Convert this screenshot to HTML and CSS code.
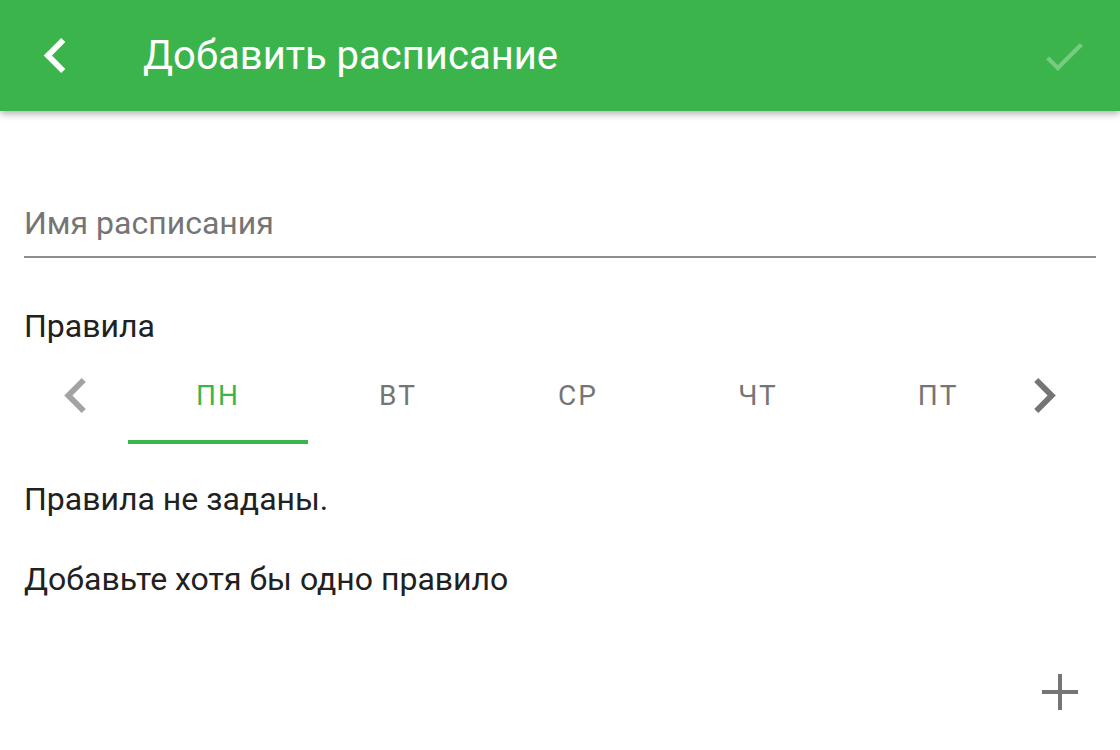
FILE: index.html
```html
<!DOCTYPE html>
<html lang="ru">
<head>
<meta charset="utf-8">
<title>Добавить расписание</title>
<link rel="stylesheet" href="styles.css">
</head>
<body>
<header class="appbar">
  <button class="appbar-back" aria-label="Назад">
    <svg class="chev" viewBox="8 6 7.41 12" width="23" height="35"><path d="M15.41 7.41L14 6l-6 6 6 6 1.41-1.41L10.83 12z" fill="#fff"/></svg>
  </button>
  <h1 class="appbar-title">Добавить расписание</h1>
  <button class="appbar-save" aria-label="Сохранить">
    <svg viewBox="3.41 5.59 17.59 13.41" width="37" height="28"><path d="M9 16.17L4.83 12l-1.42 1.41L9 19 21 7l-1.41-1.41z" fill="#fff"/></svg>
  </button>
</header>
<main class="content">
  <div class="field">Имя расписания</div>
  <div class="section-title">Правила</div>
  <div class="tabs">
    <div class="tab-arrow tab-arrow-left">
      <svg viewBox="8 6 7.41 12" width="22" height="35"><path d="M15.41 7.41L14 6l-6 6 6 6 1.41-1.41L10.83 12z" fill="#a3a3a3"/></svg>
    </div>
    <div class="tab active">ПН</div>
    <div class="tab">ВТ</div>
    <div class="tab">СР</div>
    <div class="tab">ЧТ</div>
    <div class="tab">ПТ</div>
    <div class="tab-arrow tab-arrow-right">
      <svg viewBox="8.59 6 7.41 12" width="22" height="35"><path d="M8.59 16.59L10 18l6-6-6-6-1.41 1.41L13.17 12z" fill="#757575"/></svg>
    </div>
  </div>
  <p class="empty-title">Правила не заданы.</p>
  <p class="empty-hint">Добавьте хотя бы одно правило</p>
  <div class="add-row">
    <button class="add-btn" aria-label="Добавить правило">
      <svg viewBox="0 0 36 36" width="36" height="36"><path d="M16 0h4v16h16v4H20v16h-4V20H0v-4h16z" fill="#757575"/></svg>
    </button>
  </div>
</main>
</body>
</html>
```

FILE: styles.css
```css
* { box-sizing: border-box; }

html, body {
  margin: 0;
  padding: 0;
  background: #ffffff;
}

body {
  width: 1120px;
  height: 750px;
  overflow: hidden;
  font-family: Roboto, "Noto Sans", "Liberation Sans", sans-serif;
  color: #212121;
}

button {
  border: 0;
  background: none;
  padding: 0;
  margin: 0;
  cursor: pointer;
}

svg { display: block; }

.appbar {
  height: 111px;
  background: #3bb54b;
  display: flex;
  align-items: center;
  padding-left: 43px;
  padding-right: 37px;
  box-shadow: 0 3px 7px rgba(0, 0, 0, 0.3);
  position: relative;
  z-index: 1;
}

.appbar-back {
  width: 23px;
  height: 35px;
}

.appbar-title {
  margin: 0 0 0 77px;
  flex: 1;
  font-size: 40px;
  line-height: 46px;
  font-weight: 400;
  color: #ffffff;
}

.appbar-save {
  width: 37px;
  height: 28px;
  opacity: 0.3;
  margin-top: 2px;
}

.content {
  padding: 0 24px;
}

.field {
  margin-top: 94px;
  font-size: 32px;
  line-height: 36px;
  color: #757575;
  padding-bottom: 15px;
  border-bottom: 2px solid #8e8e8e;
}

.section-title {
  margin-top: 50px;
  font-size: 32px;
  line-height: 36px;
  color: #212121;
}

.tabs {
  margin-top: 4px;
  height: 96px;
  display: flex;
}

.tab-arrow {
  padding-top: 30px;
}

.tab-arrow-left {
  width: 104px;
  padding-left: 40px;
}

.tab-arrow-right {
  padding-left: 6px;
}

.tab {
  width: 180px;
  height: 96px;
  padding-top: 32px;
  border-bottom: 4px solid transparent;
  text-align: center;
  font-size: 28px;
  line-height: 32px;
  letter-spacing: 2px;
  color: #757575;
}

.tab.active {
  color: #3bb54b;
  border-bottom-color: #3bb54b;
}

.empty-title,
.empty-hint {
  margin: 0;
  font-size: 32px;
  line-height: 36px;
  color: #212121;
}

.empty-title {
  margin-top: 37px;
}

.empty-hint {
  margin-top: 44px;
}

.add-row {
  display: flex;
  justify-content: flex-end;
  margin-top: 77px;
  padding-right: 18px;
}

.add-btn {
  width: 36px;
  height: 36px;
}
```
